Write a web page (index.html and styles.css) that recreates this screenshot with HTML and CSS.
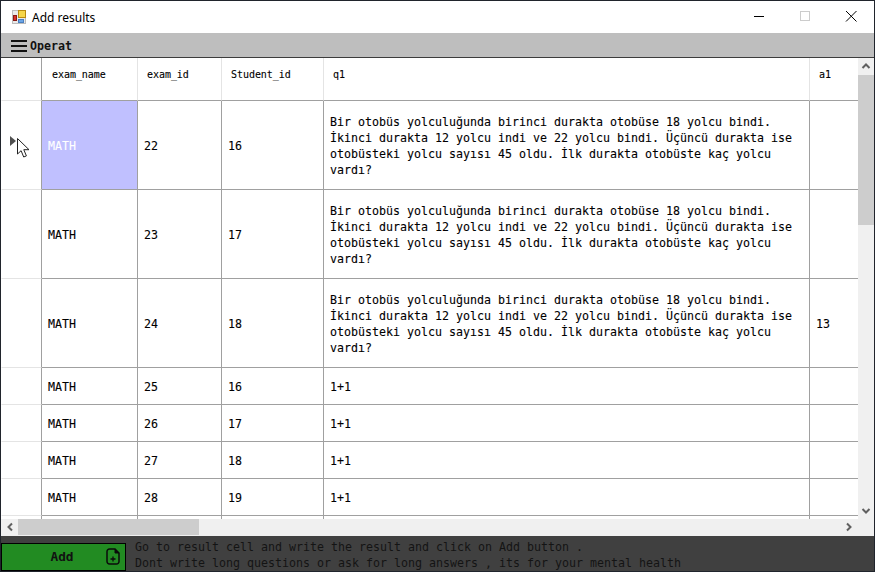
FILE: index.html
```html
<!DOCTYPE html>
<html lang="en">
<head>
<meta charset="utf-8">
<title>Add results</title>
<link rel="stylesheet" href="styles.css">
</head>
<body>
<div class="window">
  <header class="titlebar">
    <svg class="app-icon" width="14" height="14" viewBox="0 0 14 14">
      <rect x="0.5" y="0.5" width="13" height="13" fill="#e9e9e9" stroke="#bcbcbc"/>
      <rect x="6.500" y="0.500" width="7" height="7" fill="#f6d64a" stroke="#b98a10"/>
      <rect x="1.500" y="5.500" width="3" height="5" fill="#d8322a" stroke="#8a1a14"/>
      <rect x="6.500" y="9.500" width="5" height="3" fill="#6aa5e6" stroke="#4a7fc0"/>
    </svg>
    <span class="title">Add results</span>
    <div class="controls">
      <svg class="ctl" width="46" height="32" viewBox="0 0 46 32"><path d="M18 15.500h10" stroke="#000"/></svg>
      <svg class="ctl" width="46" height="32" viewBox="0 0 46 32"><rect x="18.5" y="10.5" width="9" height="9" fill="none" stroke="#ccc"/></svg>
      <svg class="ctl" width="46" height="32" viewBox="0 0 46 32"><path d="M18 10l10.500 10.500M28.500 10L18 20.500" stroke="#000" fill="none"/></svg>
    </div>
  </header>
  <nav class="toolbar">
    <svg width="16" height="12" viewBox="0 0 16 12"><path d="M0 1h16M0 6h16M0 11h16" stroke="#111" stroke-width="2"/></svg>
    <span class="menu">Operat</span>
  </nav>
  <main class="body">
    <div class="gridview">
      <div class="grid">
        <div class="row head">
          <div class="cell rh"></div>
          <div class="cell first">exam_name</div>
          <div class="cell">exam_id</div>
          <div class="cell">Student_id</div>
          <div class="cell">q1</div>
          <div class="cell">a1</div>
        </div>
        <div class="row tall">
          <div class="cell rh">
            <svg class="marker" width="7" height="10" viewBox="0 0 7 10"><path d="M0 0l6 5-6 5z" fill="#505050"/></svg>
            <svg class="cursor" width="13" height="20" viewBox="0 0 13 20"><path d="M0.500 0.500v15.500l3.600-3.300 2.600 6.300 2.700-1.100-2.600-6.200h5.200z" fill="#fff" stroke="#222"/></svg>
          </div>
          <div class="cell sel">MATH</div>
          <div class="cell">22</div>
          <div class="cell">16</div>
          <div class="cell">Bir otobüs yolculuğunda birinci durakta otobüse 18 yolcu bindi. İkinci durakta 12 yolcu indi ve 22 yolcu bindi. Üçüncü durakta ise otobüsteki yolcu sayısı 45 oldu. İlk durakta otobüste kaç yolcu vardı?</div>
          <div class="cell"></div>
        </div>
        <div class="row tall">
          <div class="cell rh"></div>
          <div class="cell">MATH</div>
          <div class="cell">23</div>
          <div class="cell">17</div>
          <div class="cell">Bir otobüs yolculuğunda birinci durakta otobüse 18 yolcu bindi. İkinci durakta 12 yolcu indi ve 22 yolcu bindi. Üçüncü durakta ise otobüsteki yolcu sayısı 45 oldu. İlk durakta otobüste kaç yolcu vardı?</div>
          <div class="cell"></div>
        </div>
        <div class="row tall">
          <div class="cell rh"></div>
          <div class="cell">MATH</div>
          <div class="cell">24</div>
          <div class="cell">18</div>
          <div class="cell">Bir otobüs yolculuğunda birinci durakta otobüse 18 yolcu bindi. İkinci durakta 12 yolcu indi ve 22 yolcu bindi. Üçüncü durakta ise otobüsteki yolcu sayısı 45 oldu. İlk durakta otobüste kaç yolcu vardı?</div>
          <div class="cell">13</div>
        </div>
        <div class="row">
          <div class="cell rh"></div><div class="cell">MATH</div><div class="cell">25</div><div class="cell">16</div><div class="cell">1+1</div><div class="cell"></div>
        </div>
        <div class="row">
          <div class="cell rh"></div><div class="cell">MATH</div><div class="cell">26</div><div class="cell">17</div><div class="cell">1+1</div><div class="cell"></div>
        </div>
        <div class="row">
          <div class="cell rh"></div><div class="cell">MATH</div><div class="cell">27</div><div class="cell">18</div><div class="cell">1+1</div><div class="cell"></div>
        </div>
        <div class="row">
          <div class="cell rh"></div><div class="cell">MATH</div><div class="cell">28</div><div class="cell">19</div><div class="cell">1+1</div><div class="cell"></div>
        </div>
        <div class="row stub">
          <div class="cell rh"></div><div class="cell"></div><div class="cell"></div><div class="cell"></div><div class="cell"></div><div class="cell"></div>
        </div>
      </div>
      <div class="vscroll">
        <svg width="16" height="17" viewBox="0 0 16 17"><path d="M4.500 10L8 6.500 11.500 10" fill="none" stroke="#606060" stroke-width="2"/></svg>
        <div class="vtrack"><div class="vthumb"></div></div>
        <svg width="16" height="17" viewBox="0 0 16 17"><path d="M4.500 7L8 10.500 11.500 7" fill="none" stroke="#606060" stroke-width="2"/></svg>
      </div>
    </div>
    <div class="hscroll">
      <svg width="17" height="16" viewBox="0 0 17 16"><path d="M11 4.500L7.500 8 11 11.500" fill="none" stroke="#606060" stroke-width="2"/></svg>
      <div class="htrack"><div class="hthumb"></div></div>
      <svg width="17" height="16" viewBox="0 0 17 16"><path d="M6 4.500L9.500 8 6 11.500" fill="none" stroke="#606060" stroke-width="2"/></svg>
      <div class="hcorner"></div>
    </div>
  </main>
  <footer class="footer">
    <button class="add">
      <span class="add-label">Add</span>
      <svg class="add-icon" width="14" height="17" viewBox="0 0 14 17">
        <path d="M3.500 1H9l4 4v8.500a2.500 2.500 0 0 1-2.500 2.500h-7A2.500 2.500 0 0 1 1 13.500v-10A2.500 2.500 0 0 1 3.500 1z" fill="none" stroke="#0b0b0b" stroke-width="1.500"/>
        <path d="M9 1v4h4" fill="#0b0b0b" stroke="#0b0b0b"/>
        <path d="M7 8.500v5M4.500 11h5" stroke="#0b0b0b" stroke-width="1.300"/>
      </svg>
    </button>
    <p class="hint">Go to result cell and write the result and click on Add button .<br>Dont write long questions or ask for long answers , its for your mental health</p>
  </footer>
</div>
</body>
</html>
```
FILE: styles.css
```css
* { box-sizing: border-box; }
html, body { margin: 0; height: 100%; overflow: hidden; }
body { background: #1b2233; }
.window {
  width: 875px; height: 572px;
  display: flex; flex-direction: column;
  border: 1px solid #20242c;
  background: #fff;
  font-family: "DejaVu Sans Mono", "Liberation Mono", monospace;
  color: #000;
}
.titlebar {
  height: 32px; flex: none;
  display: flex; align-items: center;
  padding-left: 11px;
  background: #fff;
}
.app-icon { margin-right: 4px; display: block; }
.title { font: 12px "Noto Sans", "Open Sans", sans-serif; margin-left: 2px; }
.controls { margin-left: auto; display: flex; }
.ctl { display: block; }
.toolbar {
  height: 25px; flex: none;
  display: flex; align-items: center; gap: 3px;
  padding: 1px 0 0 10px;
  background: #bebebe;
  border-bottom: 1px solid #3c3c3c;
}
.menu { font-size: 11.63px; font-weight: bold; color: #111; }
.body { flex: 1; min-height: 0; display: flex; flex-direction: column; }
.gridview { flex: 1; min-height: 0; display: flex; }
.grid { flex: 1; min-width: 0; overflow: hidden; background: #fff; }
.row {
  display: grid;
  grid-template-columns: 41px 96px 84px 102px 486px 60px;
  height: 37px;
}
.tall { height: 89px; }
.head { height: 43px; }
.stub { height: 4px; }
.cell {
  border-right: 1px solid #a0a0a0;
  border-bottom: 1px solid #a0a0a0;
  padding: 2px 6px 0;
  display: flex; align-items: center;
  font-size: 11.63px; line-height: 16px;
  -webkit-text-stroke: 0.1px currentColor;
  overflow: hidden;
}
.rh { position: relative; border-bottom-color: #e4e4e4; border-left: 1px solid #fff; }
.stub .cell { border-bottom: 0; }
.head .cell {
  border-right-color: #e4e4e4;
  padding: 0 10px 8px 9px;
  font-size: 10px;
  letter-spacing: -0.05px;
}
.head .cell.rh { border-right-color: #a0a0a0; border-bottom-color: #e4e4e4; }
.head .cell.first { padding-left: 10px; }
.sel { background: #c0c0ff; color: #fff; }
.marker { position: absolute; left: 8px; top: 35px; }
.cursor { position: absolute; left: 15px; top: 37px; }
.vscroll {
  width: 16px; flex: none;
  display: flex; flex-direction: column;
  background: #f0f0f0;
}
.vscroll svg, .hscroll svg { flex: none; display: block; }
.vtrack { flex: 1; }
.vthumb { height: 150px; background: #cdcdcd; }
.hscroll { height: 17px; flex: none; display: flex; background: #f0f0f0; }
.htrack { flex: 1; }
.hthumb { width: 181px; height: 16px; background: #cdcdcd; }
.hcorner { width: 16px; flex: none; }
.footer {
  height: 35px; flex: none;
  display: flex; align-items: center;
  gap: 9px;
  background: #404040;
}
.add {
  width: 125px; height: 28px; flex: none;
  margin: 6px 0 0 0; padding: 0 5px 0 0;
  display: flex; align-items: center;
  background: #228b22;
  border: 1px solid #000;
  color: #111;
  font: bold 12.8px "DejaVu Sans Mono", monospace;
}
.add-label { flex: 1; text-align: center; padding-left: 16px; }
.add-icon { margin-left: 0; display: block; }
.hint {
  margin: 3px 0 0;
  font-size: 11.63px; line-height: 16px;
  white-space: nowrap;
  color: #141414;
}
```
